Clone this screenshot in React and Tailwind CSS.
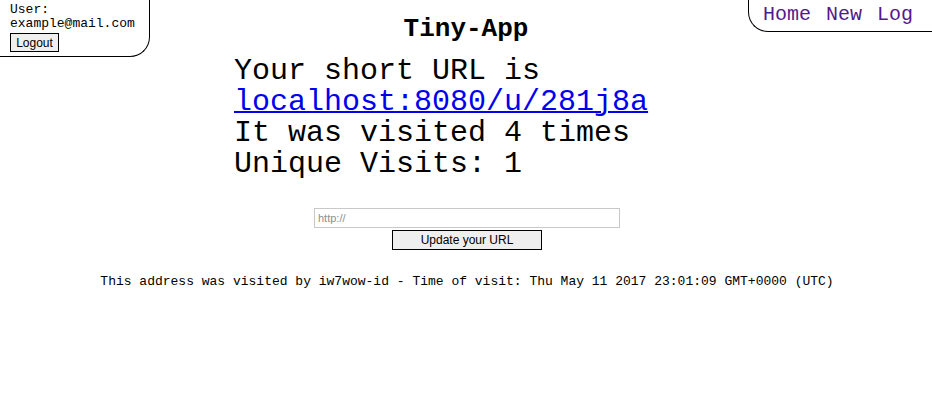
export default function App() {
  const mono = { fontFamily: '"Liberation Mono", "Courier New", monospace' };
  return (
    <div className="w-[932px] h-[403px] bg-white text-black" style={mono}>
      <div className="grid grid-cols-[1fr_auto_1fr] items-start h-[56px]">
        <div className="justify-self-start w-[150px] h-[57px] border-r border-b border-black rounded-br-[20px] pl-[10px] pt-[3px] text-[13px] leading-[14px]">
          <div>User:</div>
          <div>example@mail.com</div>
          <button className="mt-[2px] h-[19px] w-[49px] border border-black bg-[#efefef] text-[12px] leading-none" style={{ fontFamily: '"Liberation Sans", Arial, sans-serif' }}>
            Logout
          </button>
        </div>
        <h1 className="text-[26px] font-bold leading-none pt-[16px]">Tiny-App</h1>
        <div className="justify-self-end w-[184px] h-[32px] border-l border-b border-black rounded-bl-[20px] pl-[14px] pt-[5px] text-[20px] leading-[20px] text-[#551a8b] flex gap-[15px]">
          <a>Home</a>
          <a>New</a>
          <a>Log</a>
        </div>
      </div>
      <div className="ml-[234px] text-[30px] leading-[31px]">
        <div>Your short URL is</div>
        <a className="text-[#0000ee] underline decoration-2">localhost:8080/u/281j8a</a>
        <div>It was visited 4 times</div>
        <div>Unique Visits: 1</div>
      </div>
      <div className="flex flex-col items-center mt-[28px]" style={{ fontFamily: '"Liberation Sans", Arial, sans-serif' }}>
        <input className="ml-[2px] w-[306px] h-[20px] border border-[#c8c8c8] px-[3px] text-[11px] placeholder:text-[#8e8e8e]" placeholder="http://" />
        <button className="mt-[2px] ml-[2px] w-[150px] h-[20px] border border-black bg-[#efefef] text-[12px] leading-none">Update your URL</button>
      </div>
      <div className="mt-[24px] pl-[2px] text-center text-[13px] leading-[15px]">
        This address was visited by iw7wow-id - Time of visit: Thu May 11 2017 23:01:09 GMT+0000 (UTC)
      </div>
    </div>
  );
}
